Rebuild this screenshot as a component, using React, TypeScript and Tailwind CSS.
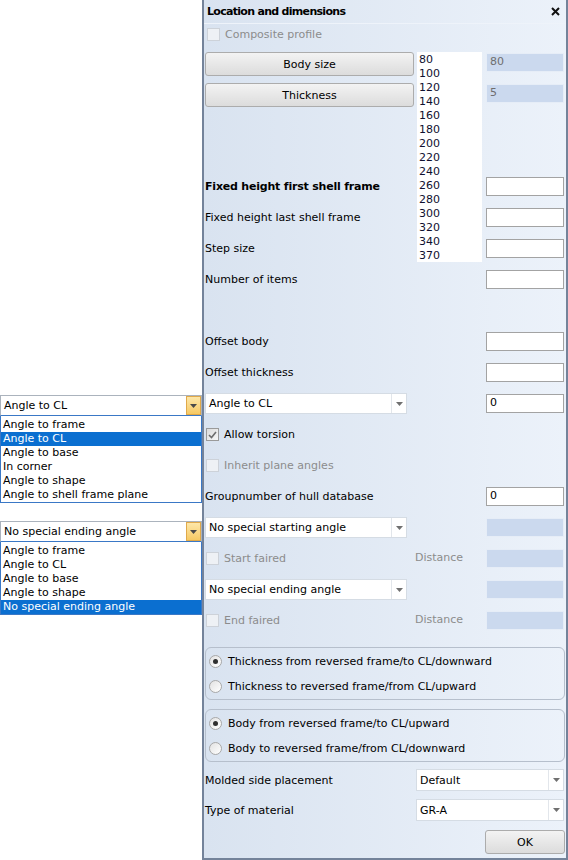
import React from "react";

function Arrow({ color = "#707070" }: { color?: string }) {
  return (
    <svg width="7" height="4" viewBox="0 0 7 4">
      <path d="M0 0h7L3.5 4z" fill={color} />
    </svg>
  );
}

function Combo({ value, className = "" }: { value: string; className?: string }) {
  return (
    <div className={`flex h-[21px] border border-[#d5dce4] bg-white ${className}`}>
      <span className="flex flex-1 items-center pl-[3px] pt-[2px]">{value}</span>
      <span className="flex w-[15px] items-center justify-center border-l border-[#e2e6eb]">
        <Arrow />
      </span>
    </div>
  );
}

function Field({ value = "", disabled = false }: { value?: string; disabled?: boolean }) {
  return (
    <div
      className={`h-[19px] w-[78px] border pl-[3px] leading-[16px] ${
        disabled ? "border-[#e6edf7] bg-[#cbd9ee] text-[#6e6e6e]" : "border-[#a3a3a3] bg-white"
      }`}
    >
      {value}
    </div>
  );
}

function Check({ checked = false, disabled = false }: { checked?: boolean; disabled?: boolean }) {
  return (
    <span
      className={`flex size-[13px] shrink-0 items-center justify-center border ${
        disabled
          ? "border-[#cdd2d9] bg-[#eef1f5]"
          : "border-[#9a9a9a] bg-gradient-to-br from-[#dcdcdc] to-[#f7f7f7]"
      }`}
    >
      {checked && (
        <svg width="9" height="8" viewBox="0 0 9 8">
          <path d="M1 4l2.5 2.5L8 1" stroke="#6d6d6d" strokeWidth="1.6" fill="none" />
        </svg>
      )}
    </span>
  );
}

function Radio({ on = false, label }: { on?: boolean; label: string }) {
  return (
    <div className="flex h-[25px] items-center gap-[6px] pl-[3px]">
      <span className="flex size-[13px] items-center justify-center rounded-full border border-[#a8a8a8] bg-gradient-to-br from-[#e2e2e2] to-white">
        {on && <span className="size-[5px] rounded-full bg-[#2f2f2f]" />}
      </span>
      <span className="pt-[2px]">{label}</span>
    </div>
  );
}

function Btn({ label, className = "" }: { label: string; className?: string }) {
  return (
    <div
      className={`flex h-[24px] items-center justify-center rounded-[3px] border border-[#acacac] bg-gradient-to-b from-[#f3f3f3] to-[#dcdcdc] pt-[2px] ${className}`}
    >
      {label}
    </div>
  );
}

function OpenCombo({ value, items, selected }: { value: string; items: string[]; selected: number }) {
  return (
    <div>
      <div className="flex h-[21px] border border-[#abb3bd] border-b-[#3a78c6] bg-white">
        <span className="flex flex-1 items-center pl-[3px] pt-[2px]">{value}</span>
        <span className="flex w-[15px] items-center justify-center border border-[#e0a94a] bg-gradient-to-b from-[#fde7a8] to-[#f6c963]">
          <Arrow color="#4a4a4a" />
        </span>
      </div>
      <ul className="border border-t-0 border-[#3a78c6] bg-white pt-[2px]">
        {items.map((it, i) => (
          <li
            key={it}
            className={`h-[14px] pl-[2px] leading-[14px] ${i === selected ? "bg-[#0b6fd0] text-white" : ""}`}
          >
            {it}
          </li>
        ))}
      </ul>
    </div>
  );
}

const sizes = ["80", "100", "120", "140", "160", "180", "200", "220", "240", "260", "280", "300", "320", "340", "370"];

export default function App() {
  return (
    <div className="flex h-[860px] w-[568px] bg-white font-[family-name:DejaVu_Sans,sans-serif] text-[11px] text-black">
      <div className="w-[202px] shrink-0 pt-[395px]">
        <OpenCombo
          value="Angle to CL"
          selected={1}
          items={["Angle to frame", "Angle to CL", "Angle to base", "In corner", "Angle to shape", "Angle to shell frame plane"]}
        />
        <div className="mt-[18px]">
          <OpenCombo
            value="No special ending angle"
            selected={4}
            items={["Angle to frame", "Angle to CL", "Angle to base", "Angle to shape", "No special ending angle"]}
          />
        </div>
      </div>

      <div className="flex w-[366px] flex-col border-2 border-t-0 border-[#74839a] bg-gradient-to-r from-[#d9e3f0] to-[#ecf2fa]">
        <div className="flex h-[24px] items-center justify-between border-b border-[#eef3fa] pl-[3px] pr-[6px]">
          <span className="pt-[2px] font-bold tracking-[-0.7px]">Location and dimensions</span>
          <svg width="9" height="9" viewBox="0 0 9 9">
            <path d="M1 1l7 7M8 1L1 8" stroke="#111" strokeWidth="2" />
          </svg>
        </div>

        <div className="flex h-[21px] items-center gap-[5px] pl-[3px] text-[#8c8c8c]">
          <Check disabled />
          <span className="pt-[2px]">Composite profile</span>
        </div>

        <div className="mt-[7px] flex pl-[1px]">
          <div className="w-[209px]">
            <div className="h-[119px]">
              <Btn label="Body size" />
              <Btn label="Thickness" className="mt-[7px]" />
            </div>
            <div className="flex h-[31px] items-center pt-[2px] font-bold tracking-[-0.2px]">
              Fixed height first shell frame
            </div>
            <div className="flex h-[31px] items-center pt-[2px]">Fixed height last shell frame</div>
            <div className="flex h-[31px] items-center pt-[2px]">Step size</div>
            <div className="flex h-[31px] items-center pt-[2px]">Number of items</div>
            <div className="h-[31px]" />
            <div className="flex h-[31px] items-center pt-[2px]">Offset body</div>
            <div className="flex h-[31px] items-center pt-[2px]">Offset thickness</div>
          </div>
          <ul className="ml-[3px] h-[210px] w-[65px] bg-white pl-[2px] pt-[1px] text-[#101030]">
            {sizes.map((s) => (
              <li key={s} className="h-[14px] leading-[14px]">
                {s}
              </li>
            ))}
          </ul>
          <div className="ml-[4px] w-[78px]">
            <div className="h-[119px] pt-[1px]">
              <Field value="80" disabled />
              <div className="mt-[12px]">
                <Field value="5" disabled />
              </div>
            </div>
            {[0, 1, 2, 3].map((i) => (
              <div key={i} className="flex h-[31px] items-center">
                <Field />
              </div>
            ))}
            <div className="h-[31px]" />
            <div className="flex h-[31px] items-center">
              <Field />
            </div>
            <div className="flex h-[31px] items-center">
              <Field />
            </div>
          </div>
        </div>

        <div className="pl-[1px] pr-[2px]">
          <div className="flex h-[31px] items-center justify-between">
            <Combo value="Angle to CL" className="w-[202px]" />
            <Field value="0" />
          </div>
          <div className="flex h-[31px] items-center gap-[5px] pl-[1px]">
            <Check checked />
            <span className="pt-[2px]">Allow torsion</span>
          </div>
          <div className="flex h-[31px] items-center gap-[5px] pl-[1px] text-[#8c8c8c]">
            <Check disabled />
            <span className="pt-[2px]">Inherit plane angles</span>
          </div>
          <div className="flex h-[31px] items-center justify-between">
            <span className="pt-[2px]">Groupnumber of hull database</span>
            <Field value="0" />
          </div>
          <div className="flex h-[31px] items-center justify-between">
            <Combo value="No special starting angle" className="w-[202px]" />
            <Field disabled />
          </div>
          <div className="flex h-[31px] items-center pl-[1px] text-[#8c8c8c]">
            <div className="flex w-[209px] items-center gap-[5px]">
              <Check disabled />
              <span className="pt-[2px]">Start faired</span>
            </div>
            <span>Distance</span>
            <div className="ml-auto">
              <Field disabled />
            </div>
          </div>
          <div className="flex h-[31px] items-center justify-between">
            <Combo value="No special ending angle" className="w-[202px]" />
            <Field disabled />
          </div>
          <div className="flex h-[31px] items-center pl-[1px] text-[#8c8c8c]">
            <div className="flex w-[209px] items-center gap-[5px]">
              <Check disabled />
              <span className="pt-[2px]">End faired</span>
            </div>
            <span>Distance</span>
            <div className="ml-auto">
              <Field disabled />
            </div>
          </div>

          <div className="mt-[11px] h-[53px] w-[360px] rounded-[6px] border border-[#b6bfcc] pt-[1px]">
            <Radio on label="Thickness from reversed frame/to CL/downward" />
            <Radio label="Thickness to reversed frame/from CL/upward" />
          </div>
          <div className="mt-[9px] h-[53px] w-[360px] rounded-[6px] border border-[#b6bfcc] pt-[1px]">
            <Radio on label="Body from reversed frame/to CL/upward" />
            <Radio label="Body to reversed frame/from CL/downward" />
          </div>

          <div className="mt-[3px] flex h-[30px] items-center justify-between">
            <span className="pt-[2px]">Molded side placement</span>
            <Combo value="Default" className="h-[22px] w-[148px]" />
          </div>
          <div className="flex h-[30px] items-center justify-between">
            <span className="pt-[2px]">Type of material</span>
            <Combo value="GR-A" className="h-[22px] w-[148px]" />
          </div>
          <div className="mt-[5px] flex justify-end">
            <Btn label="OK" className="mr-[-1px] w-[80px]" />
          </div>
        </div>
      </div>
    </div>
  );
}
